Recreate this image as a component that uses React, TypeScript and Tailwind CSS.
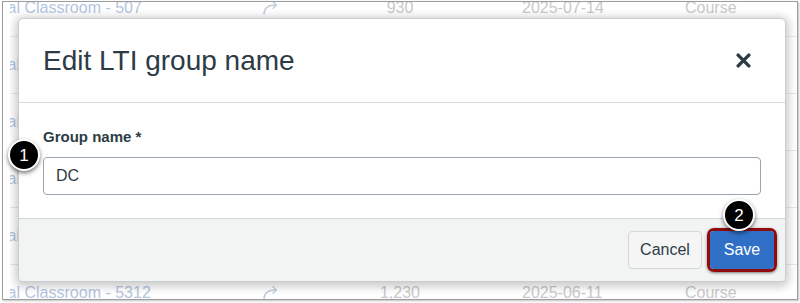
import React from 'react'

type Row = { name: string; count: string; date: string; type: string }

const rows: Row[] = [
  { name: 'Virtual Classroom - 507', count: '930', date: '2025-07-14', type: 'Course' },
  { name: 'Virtual Classroom - 4410', count: '312', date: '2025-07-09', type: 'Course' },
  { name: 'Virtual Classroom - 2281', count: '88', date: '2025-07-02', type: 'Course' },
  { name: 'Virtual Classroom - 1907', count: '4,115', date: '2025-06-27', type: 'Course' },
  { name: 'Virtual Classroom - 6021', count: '77', date: '2025-06-18', type: 'Course' },
  { name: 'Virtual Classroom - 5312', count: '1,230', date: '2025-06-11', type: 'Course' },
]

const ShareArrow = () => (
  <svg width="18" height="16" viewBox="0 0 18 16" fill="none" stroke="#c3cedc" strokeWidth="1.4" strokeLinecap="round" strokeLinejoin="round">
    <path d="M2 14 C2 8 6 5 14 5" />
    <path d="M11 1.8 L14.5 5 L11 8.2" />
  </svg>
)

const Badge = ({ n, className }: { n: string; className: string }) => (
  <div
    className={`absolute w-8 h-8 rounded-full bg-black border-2 border-white shadow-[0_2px_4px_rgba(0,0,0,0.55)] flex items-center justify-center text-white text-[17px] leading-none ${className}`}
  >
    {n}
  </div>
)

export default function App() {
  return (
    <div className="relative w-[800px] h-[303px] bg-white overflow-hidden pt-[1px] pl-[2px] font-['Liberation_Sans',Arial,sans-serif]">
      <div className="w-[796px] h-[299px] border border-[#9c9c9c] bg-white pl-[7px] shadow-[1px_1px_2px_rgba(0,0,0,0.25)]">
        <div className="relative h-full overflow-hidden">
          {/* faded table behind the dialog */}
          <div className="-mt-[22px]">
            {rows.map((r) => (
              <div key={r.name} className="flex items-center h-[57px] border-b border-[#e8e8e8] text-[16px] whitespace-nowrap">
                <div className="w-[252px] text-[#b3c5e0]">
                  <span className="-ml-[35px] block">{r.name}</span>
                </div>
                <div className="w-[100px]">
                  <ShareArrow />
                </div>
                <div className="w-[76px] text-center text-[#c9c9c9]">{r.count}</div>
                <div className="w-[84px]" />
                <div className="w-[163px] text-[#c9c9c9]">{r.date}</div>
                <div className="text-[#c9c9c9]">{r.type}</div>
              </div>
            ))}
          </div>

          {/* dialog */}
          <div className="absolute left-[8px] top-[16px] w-[768px] bg-white border border-[#c9cdd1] rounded-[5px] overflow-hidden shadow-[0_2px_9px_3px_rgba(0,0,0,0.2)]">
            <div className="h-[84px] flex items-center justify-between pl-6 pr-[23px] border-b border-[#d7dadd]">
              <h2 className="text-[28px] leading-none text-[#2d3b45]">Edit LTI group name</h2>
              <button className="w-[38px] h-[38px] flex items-center justify-center">
                <svg width="15" height="15" viewBox="0 0 14 14" stroke="#2d3b45" strokeWidth="3.2" strokeLinecap="round">
                  <path d="M2 2 L12 12 M12 2 L2 12" />
                </svg>
              </button>
            </div>
            <div className="px-6 pt-6 pb-[23px]">
              <label className="block text-[15px] leading-[20px] font-bold text-[#2d3b45]">Group name *</label>
              <div className="mt-[10px] h-[38px] border border-[#98a3b3] rounded-[4px] flex items-center px-3 text-[16px] text-[#2d3b45]">
                DC
              </div>
            </div>
            <div className="h-[63px] bg-[#f2f3f3] border-t border-[#d2d5d8] flex items-center justify-end gap-[5px] pr-[8px]">
              <button className="w-[74px] h-[38px] rounded-[4px] bg-[#f5f5f5] border border-[#d3d7da] text-[16px] text-[#2d3b45]">
                Cancel
              </button>
              <div className="rounded-[7px] border-[3px] border-[#8f0b0e] shadow-[0_1px_3px_rgba(0,0,0,0.5)]">
                <button className="w-[64px] h-[38px] rounded-[4px] bg-[#2f6fc5] text-[16px] text-white">Save</button>
              </div>
            </div>
          </div>
        </div>
      </div>

      <Badge n="1" className="left-[8px] top-[139px]" />
      <Badge n="2" className="left-[723px] top-[199px]" />
    </div>
  )
}
